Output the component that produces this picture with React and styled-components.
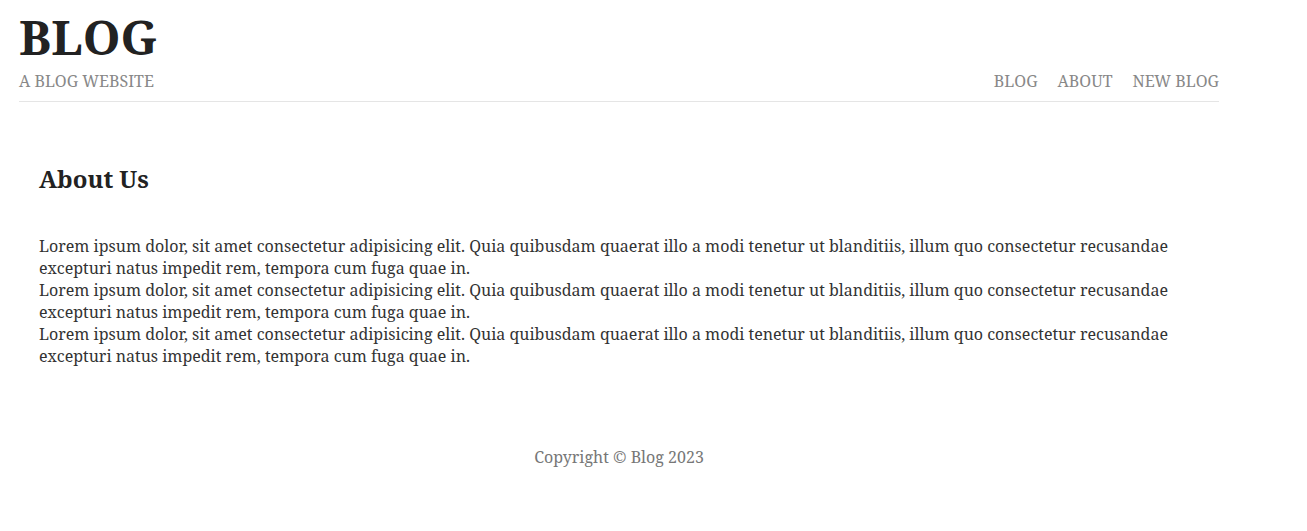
import React from 'react';
import styled, { createGlobalStyle } from 'styled-components';

const GlobalStyle = createGlobalStyle`
  body {
    margin: 0;
    background: #fff;
    font-family: "Noto Serif", "DejaVu Serif", serif;
    color: #333;
  }
`;

const Page = styled.div`
  width: 1200px;
  padding: 0 19px;
`;

const Header = styled.header`
  display: flex;
  justify-content: space-between;
  align-items: flex-end;
  padding: 8px 0 9px;
  border-bottom: 1px solid #e5e5e5;
`;

const Brand = styled.div`
  display: flex;
  flex-direction: column;
`;

const Logo = styled.h1`
  margin: 0 0 4px;
  font-size: 48px;
  font-weight: 700;
  line-height: 1.2;
  color: #222;
`;

const Tagline = styled.span`
  font-size: 16px;
  color: #888;
  text-transform: uppercase;
`;

const Nav = styled.nav`
  display: flex;
  gap: 20px;
`;

const NavLink = styled.a`
  font-size: 16px;
  color: #888;
  text-decoration: none;
  text-transform: uppercase;
`;

const Main = styled.main`
  padding: 38px 20px 57px;
`;

const Title = styled.h2`
  margin: 22px 0 40px;
  font-size: 24px;
  font-weight: 700;
  color: #222;
`;

const Text = styled.p`
  margin: 0;
  font-size: 16px;
  color: #333;
`;

const Footer = styled.footer`
  text-align: center;
  font-size: 16px;
  color: #777;
  padding: 22px 0;
`;

const lorem =
  'Lorem ipsum dolor, sit amet consectetur adipisicing elit. Quia quibusdam quaerat illo a modi tenetur ut blanditiis, illum quo consectetur recusandae excepturi natus impedit rem, tempora cum fuga quae in.';

export default function App() {
  return (
    <Page>
      <GlobalStyle />
      <Header>
        <Brand>
          <Logo>BLOG</Logo>
          <Tagline>A Blog Website</Tagline>
        </Brand>
        <Nav>
          <NavLink href="#">Blog</NavLink>
          <NavLink href="#">About</NavLink>
          <NavLink href="#">New Blog</NavLink>
        </Nav>
      </Header>
      <Main>
        <Title>About Us</Title>
        <Text>{lorem}</Text>
        <Text>{lorem}</Text>
        <Text>{lorem}</Text>
      </Main>
      <Footer>Copyright © Blog 2023</Footer>
    </Page>
  );
}
